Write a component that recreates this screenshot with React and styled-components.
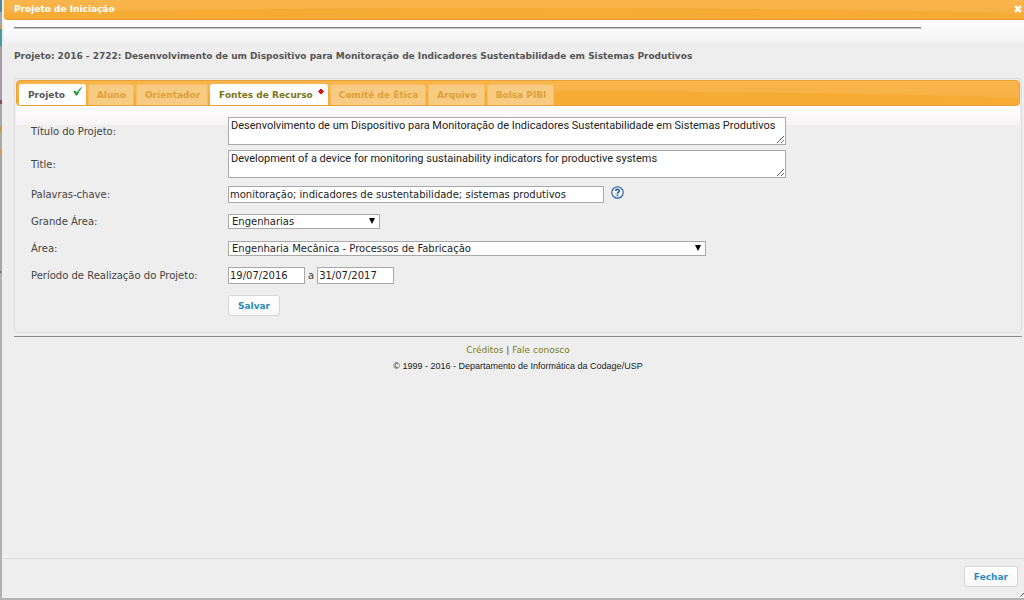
import React from 'react';
import styled, { createGlobalStyle, css } from 'styled-components';

const GlobalStyle = createGlobalStyle`
  *, *::before, *::after { box-sizing: border-box; }
  html, body { margin: 0; padding: 0; }
  body {
    font-family: "DejaVu Sans", Verdana, sans-serif;
    font-size: 10px;
    line-height: 14px;
    color: #444;
    background: #b0b0b0;
    overflow: hidden;
  }
  button, input, textarea, select { font: inherit; }
`;

const Backdrop = styled.div`
  display: flex;
  min-height: 100vh;
`;

const PageEdge = styled.div`
  flex: 0 0 2px;
  background: linear-gradient(
    #4e8c9c 0 12px, #a2a9ad 12px 25px, #c8a24c 25px 29px, #4b97a5 29px 46px,
    #a79ba8 46px 100px, #8c4a55 100px 104px, #a8a8a8 104px 126px, #c59a52 126px 133px,
    #aaa 133px 149px, #d49a5a 149px 155px, #a6a6a6 155px 271px, #7d7d7d 271px 273px, #b0b0b0 273px
  );
`;

const Dialog = styled.section`
  position: relative;
  flex: 1;
  min-width: 0;
  display: flex;
  flex-direction: column;
  padding-left: 2px;
  background: #eee;
  border-bottom: 2px solid #b4b4b4;
`;

const amber = css`
  background: radial-gradient(ellipse 60% 60% at 50% 100%, #f6ab35 0 92%, transparent 100%),
    linear-gradient(#f8b54b, #f6b044);
`;

const TitleBar = styled.header`
  ${amber}
  display: flex;
  align-items: center;
  justify-content: space-between;
  height: 20px;
  padding: 0 2px 2px 10px;
  border-bottom: 1px solid #e59a2c;
  border-bottom-left-radius: 4px;
  color: #fff;
`;

const Title = styled.h1`
  margin: 0;
  font-size: 9px;
  line-height: 14px;
`;

const CloseButton = styled.button`
  display: flex;
  padding: 0;
  border: 0;
  background: none;
  color: #fff;
`;

const Content = styled.main`
  flex: 1;
  padding: 7px 2px 0 10px;
  background: linear-gradient(#fff, #f5f3f4 22px, #eee 22px);
`;

const TopRule = styled.hr`
  width: 90%;
  height: 2px;
  margin: 0;
  border: 0;
  border-top: 1px solid #808080;
  border-bottom: 1px solid #c8c8c8;
`;

const ProjectName = styled.h2`
  margin: 20px 0 15px;
  font-size: 9px;
  line-height: 14px;
  color: #555;
`;

const Tabs = styled.div`
  padding: 1px;
  border: 1px solid #ddd;
  border-radius: 4px;
  background: #eee;
`;

const TabBar = styled.div`
  ${amber}
  display: flex;
  align-items: flex-end;
  gap: 2px;
  height: 26px;
  padding: 0 2px;
  border: 1px solid #e8a038;
  border-radius: 4px;
`;

const Tab = styled.button`
  position: relative;
  height: 21px;
  padding: 0 ${p => ({ check: 20, dot: 14 })[p.$mark] || 7}px 0 8px;
  border: 1px solid ${p => (p.$tone === 'muted' ? '#f6bd63' : '#fff')};
  border-bottom: 0;
  border-radius: 3px 3px 0 0;
  font-size: 9px;
  font-weight: bold;
  line-height: 14px;
  white-space: nowrap;
  color: ${p => ({ current: '#555', open: '#7b7415', muted: '#dfa038' })[p.$tone]};
  background: ${p => (p.$tone === 'muted' ? '#f8cb82' : '#fff')};
`;

const TabMark = styled.svg`
  position: absolute;
  top: 1px;
  right: 2px;
`;

const Form = styled.form`
  padding: 9px 15px 9px;
  background: linear-gradient(#fff, #f6f3f4 19px, #eee 19px);
`;

const Row = styled.div`
  display: grid;
  grid-template-columns: 197px 1fr;
  align-items: center;
  height: ${p => (p.$tall ? 33 : 27)}px;
`;

const Field = styled.div`
  display: flex;
  align-items: center;
  gap: 3px;
`;

const box = css`
  border: 1px solid #a9a9a9;
  border-radius: 0;
  background: #fff;
  color: #222;
  outline: 0;
`;

const TextArea = styled.textarea`
  ${box}
  display: block;
  width: 558px;
  height: 28px;
  margin-bottom: 1px;
  padding: 1px 2px;
  font-family: Roboto, Verdana, sans-serif;
  font-size: 11px;
  overflow: hidden;
  resize: both;
`;

const TextInput = styled.input`
  ${box}
  width: ${p => (p.$date ? 77 : 376)}px;
  height: 17px;
  padding: 1px;
`;

const SelectBox = styled.span`
  position: relative;
  width: ${p => (p.$wide ? 478 : 152)}px;
`;

const Select = styled.select`
  ${box}
  appearance: none;
  display: block;
  width: 100%;
  height: 15px;
  padding: 0 3px;
  line-height: 13px;
`;

const SelectArrow = styled.svg`
  position: absolute;
  top: 4px;
  right: 5px;
  pointer-events: none;
`;

const HelpButton = styled.button`
  display: flex;
  align-self: flex-start;
  margin-left: 4px;
  padding: 0;
  border: 0;
  background: none;
`;

const Button = styled.button`
  height: 21px;
  padding: 0 9px;
  border: 1px solid #d6d6d6;
  border-radius: 3px;
  background: linear-gradient(#fff, #f8f8f8);
  color: #2b8bbd;
  font-size: 9px;
  font-weight: bold;
  line-height: 14px;
`;

const PageFooter = styled.footer`
  margin-top: 3px;
  padding-top: 6px;
  border-top: 1px solid #8a8a8a;
  text-align: center;
`;

const Links = styled.p`
  margin: 0;
  font-size: 9px;
`;

const Link = styled.a`
  color: #7b7c22;
  text-decoration: none;
`;

const Copyright = styled.p`
  margin: 2px 0 0;
  font-family: "Liberation Sans", Arial, sans-serif;
  font-size: 9px;
  color: #222;
`;

const ButtonPane = styled.div`
  display: flex;
  justify-content: flex-end;
  padding: 7px 6px 11px;
  border-top: 1px solid #ddd;
`;

const ResizeGrip = styled.svg`
  position: absolute;
  right: 0;
  bottom: 1px;
`;

const TABS = [
  { name: 'Projeto', tone: 'current', mark: 'check' },
  { name: 'Aluno', tone: 'muted' },
  { name: 'Orientador', tone: 'muted' },
  { name: 'Fontes de Recurso', tone: 'open', mark: 'dot' },
  { name: 'Comitê de Ética', tone: 'muted' },
  { name: 'Arquivo', tone: 'muted' },
  { name: 'Bolsa PIBI', tone: 'muted' },
];

function Mark({ kind }) {
  return (
    <TabMark width="10" height="11" viewBox="0 0 10 11" aria-hidden="true">
      {kind === 'check' ? (
        <path d="M0.3 5.4 L2.2 4.4 L3.7 6.6 Q5.5 2.8 9.8 0.2 Q6.3 4.5 4.3 9.6 L2.9 9.6 Z" fill="#1f9a3f" />
      ) : (
        <path d="M6 3 L8.5 5.5 L6 8 L3.5 5.5 Z" fill="#d8100c" stroke="#d8100c" strokeLinejoin="round" />
      )}
    </TabMark>
  );
}

function Dropdown({ id, value, wide }) {
  return (
    <SelectBox $wide={wide}>
      <Select id={id} defaultValue={value}>
        <option>{value}</option>
      </Select>
      <SelectArrow width="6" height="6" viewBox="0 0 6 6" aria-hidden="true">
        <path d="M0 0 H6 L3 6 Z" fill="#000" />
      </SelectArrow>
    </SelectBox>
  );
}

export default function App() {
  return (
    <Backdrop>
      <GlobalStyle />
      <PageEdge />
      <Dialog role="dialog" aria-labelledby="dialog-title">
        <TitleBar>
          <Title id="dialog-title">Projeto de Iniciação</Title>
          <CloseButton type="button" aria-label="Fechar janela">
            <svg width="8" height="8" viewBox="0 0 8 8" aria-hidden="true">
              <path d="M1.2 1.2 L6.8 6.8 M6.8 1.2 L1.2 6.8" stroke="currentColor" strokeWidth="2.4" />
            </svg>
          </CloseButton>
        </TitleBar>
        <Content>
          <TopRule />
          <ProjectName>
            Projeto: 2016 - 2722: Desenvolvimento de um Dispositivo para Monitoração de Indicadores
            Sustentabilidade em Sistemas Produtivos
          </ProjectName>
          <Tabs>
            <TabBar role="tablist">
              {TABS.map(t => (
                <Tab
                  key={t.name}
                  type="button"
                  role="tab"
                  aria-selected={t.tone === 'current'}
                  $tone={t.tone}
                  $mark={t.mark}
                >
                  {t.name}
                  {t.mark && <Mark kind={t.mark} />}
                </Tab>
              ))}
            </TabBar>
            <Form onSubmit={e => e.preventDefault()}>
              <Row $tall>
                <label htmlFor="titulo">Título do Projeto:</label>
                <TextArea
                  id="titulo"
                  spellCheck={false}
                  defaultValue="Desenvolvimento de um Dispositivo para Monitoração de Indicadores Sustentabilidade em Sistemas Produtivos"
                />
              </Row>
              <Row $tall>
                <label htmlFor="title">Title:</label>
                <TextArea
                  id="title"
                  spellCheck={false}
                  defaultValue="Development of a device for monitoring sustainability indicators for productive systems"
                />
              </Row>
              <Row>
                <label htmlFor="palavras">Palavras-chave:</label>
                <Field>
                  <TextInput
                    id="palavras"
                    spellCheck={false}
                    defaultValue="monitoração; indicadores de sustentabilidade; sistemas produtivos"
                  />
                  <HelpButton type="button" aria-label="Ajuda">
                    <svg width="13" height="13" viewBox="0 0 13 13" aria-hidden="true">
                      <circle cx="6.5" cy="6.5" r="5.7" fill="#f4f8fc" stroke="#2c64a4" strokeWidth="1.2" />
                      <path
                        d="M4.6 4.9 Q4.7 3.2 6.5 3.2 Q8.4 3.3 8.4 4.8 Q8.3 5.8 7.3 6.2 Q6.5 6.6 6.5 7.7"
                        fill="none"
                        stroke="#1d5596"
                        strokeWidth="1.5"
                      />
                      <rect x="5.7" y="8.5" width="1.6" height="1.6" fill="#1d5596" />
                    </svg>
                  </HelpButton>
                </Field>
              </Row>
              <Row>
                <label htmlFor="grande-area">Grande Área:</label>
                <Dropdown id="grande-area" value="Engenharias" />
              </Row>
              <Row>
                <label htmlFor="area">Área:</label>
                <Dropdown id="area" value="Engenharia Mecânica - Processos de Fabricação" wide />
              </Row>
              <Row>
                <label htmlFor="inicio">Período de Realização do Projeto:</label>
                <Field>
                  <TextInput id="inicio" $date defaultValue="19/07/2016" />
                  <label htmlFor="fim">a</label>
                  <TextInput id="fim" $date defaultValue="31/07/2017" />
                </Field>
              </Row>
              <Row $tall>
                <span />
                <Field>
                  <Button type="submit">Salvar</Button>
                </Field>
              </Row>
            </Form>
          </Tabs>
          <PageFooter>
            <Links>
              <Link href="#creditos">Créditos</Link> | <Link href="#fale">Fale conosco</Link>
            </Links>
            <Copyright>© 1999 - 2016 - Departamento de Informática da Codage/USP</Copyright>
          </PageFooter>
        </Content>
        <ButtonPane>
          <Button type="button">Fechar</Button>
        </ButtonPane>
        <ResizeGrip width="4" height="5" viewBox="0 0 4 5" aria-hidden="true">
          <path d="M0.5 4.5 L4 1" stroke="#555" strokeWidth="1" />
        </ResizeGrip>
      </Dialog>
    </Backdrop>
  );
}
